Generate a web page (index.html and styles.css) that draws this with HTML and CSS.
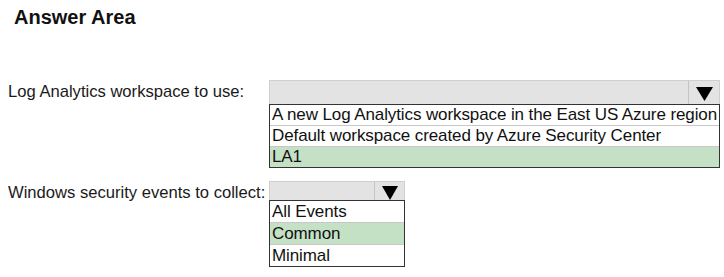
FILE: index.html
```html
<!DOCTYPE html>
<html>
<head>
<meta charset="utf-8">
<link rel="stylesheet" href="styles.css">
</head>
<body>
<div class="page">
  <h1 class="title">Answer Area</h1>
  <div class="row row-first">
    <div class="label">Log Analytics workspace to use:</div>
    <div class="dropdown dd-wide">
      <div class="dd-head">
        <div class="dd-field"></div>
        <div class="dd-btn"><svg width="17" height="14" viewBox="0 0 17 14"><polygon points="0,0 17,0 8.5,14" fill="#000"/></svg></div>
      </div>
      <div class="dd-list">
        <div class="opt">A new Log Analytics workspace in the East US Azure region</div>
        <div class="opt">Default workspace created by Azure Security Center</div>
        <div class="opt sel">LA1</div>
      </div>
    </div>
  </div>
  <div class="row row-second">
    <div class="label">Windows security events to collect:</div>
    <div class="dropdown dd-narrow">
      <div class="dd-head">
        <div class="dd-field"></div>
        <div class="dd-btn"><svg width="16" height="14" viewBox="0 0 16 14"><polygon points="0,0 16,0 8,14" fill="#000"/></svg></div>
      </div>
      <div class="dd-list">
        <div class="opt">All Events</div>
        <div class="opt sel">Common</div>
        <div class="opt">Minimal</div>
      </div>
    </div>
  </div>
</div>
</body>
</html>
```
FILE: styles.css
```css
html, body {
  margin: 0;
  padding: 0;
  background: #fff;
}
.page {
  width: 724px;
  height: 277px;
  font-family: "Liberation Sans", Arial, sans-serif;
  color: #111;
  overflow: hidden;
}
.title {
  margin: 0;
  padding: 6px 0 0 14px;
  font-size: 20px;
  font-weight: bold;
  line-height: 22px;
  color: #111;
}
.row {
  display: flex;
  align-items: flex-start;
}
.row-first {
  margin-top: 52px;
}
.row-second {
  margin-top: 13px;
}
.label {
  width: 269px;
  padding-left: 8px;
  box-sizing: border-box;
  font-size: 16.6px;
  line-height: 20px;
  padding-top: 2px;
  color: #1a1a1a;
}
.dropdown {
  display: flex;
  flex-direction: column;
}
.dd-wide {
  width: 451px;
}
.dd-narrow {
  width: 136px;
}
.dd-head {
  display: flex;
  height: 24px;
  background: #e3e3e3;
  border: 1px solid #cfcfcf;
  border-bottom: none;
  box-sizing: border-box;
}
.dd-narrow .dd-head {
  height: 19px;
}
.dd-field {
  flex: 1;
  border-right: 1px solid #c4c4c4;
}
.dd-btn {
  width: 30px;
  display: flex;
  align-items: center;
  justify-content: center;
  padding-top: 2px;
  box-sizing: border-box;
}
.dd-narrow .dd-btn {
  width: 29px;
  padding-top: 4px;
}
.dd-list {
  border: 1px solid #333;
  background: #fff;
}
.opt {
  font-size: 17px;
  line-height: 19px;
  height: 20px;
  padding-left: 2px;
  color: #111;
  border-top: 1px solid #c8c8c8;
  white-space: nowrap;
  letter-spacing: -0.1px;
}
.opt:first-child {
  border-top: none;
}
.opt.sel {
  background: #c5e1c5;
}
.dd-narrow .opt {
  height: 21px;
  line-height: 21px;
}
```
